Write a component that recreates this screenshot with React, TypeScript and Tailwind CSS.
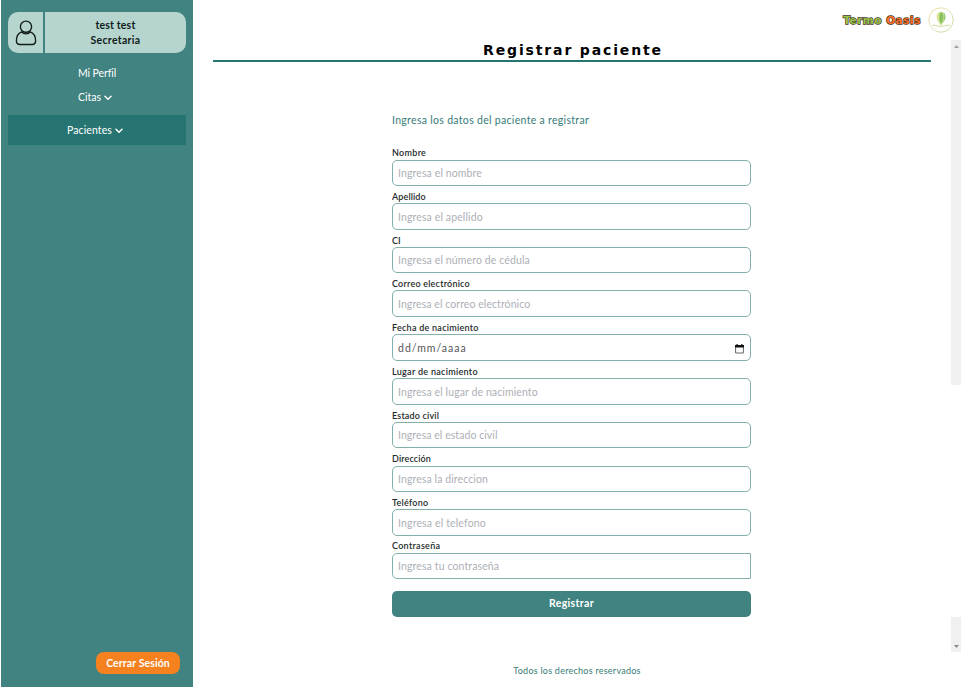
import React from "react";

type Field = { label: string; hint: string; hintTracking: string; labelTracking: string };

const fields: Field[] = [
  { label: "Nombre", hint: "Ingresa el nombre", hintTracking: "tracking-[0.12px]", labelTracking: "tracking-[0.3px]" },
  { label: "Apellido", hint: "Ingresa el apellido", hintTracking: "tracking-[0.12px]", labelTracking: "tracking-[0.12px]" },
  { label: "CI", hint: "Ingresa el número de cédula", hintTracking: "tracking-[0.12px]", labelTracking: "tracking-[0px]" },
  { label: "Correo electrónico", hint: "Ingresa el correo electrónico", hintTracking: "tracking-[0.07px]", labelTracking: "tracking-[0.22px]" },
  { label: "Fecha de nacimiento", hint: "dd/mm/aaaa", hintTracking: "tracking-[1px]", labelTracking: "tracking-[0.26px]" },
  { label: "Lugar de nacimiento", hint: "Ingresa el lugar de nacimiento", hintTracking: "tracking-[0.1px]", labelTracking: "tracking-[0.3px]" },
  { label: "Estado civil", hint: "Ingresa el estado civil", hintTracking: "tracking-[0.06px]", labelTracking: "tracking-[0.17px]" },
  { label: "Dirección", hint: "Ingresa la direccion", hintTracking: "tracking-[0.1px]", labelTracking: "tracking-[0.12px]" },
  { label: "Teléfono", hint: "Ingresa el telefono", hintTracking: "tracking-[0.15px]", labelTracking: "tracking-[0.25px]" },
  { label: "Contraseña", hint: "Ingresa tu contraseña", hintTracking: "tracking-[0.12px]", labelTracking: "tracking-[0.3px]" },
];

function Chevron() {
  return (
    <svg width="8" height="6" viewBox="0 0 8 6" fill="none" stroke="currentColor" strokeWidth="1.5" strokeLinecap="round" strokeLinejoin="round">
      <path d="M1 1.2 4 4.2 7 1.2" />
    </svg>
  );
}

function Person() {
  return (
    <svg width="22" height="26" viewBox="0 0 22 26" fill="none" stroke="#101c1b" strokeWidth="1.4">
      <circle cx="11" cy="6.7" r="5.6" />
      <path d="M6.6 11.9C3.300 13.200 1.400 16.900 1.400 20.800c0 2.700 1.200 3.700 3.500 3.700h12.200c2.300 0 3.500-1 3.500-3.700 0-3.900-1.900-7.600-5.200-8.900-2.500 2.600-6.300 2.600-8.800 0Z" strokeLinejoin="round" />
    </svg>
  );
}

function Calendar() {
  return (
    <svg className="mr-[1px]" width="9" height="10" viewBox="0 0 9 10">
      <path d="M.6 2h7.800v7H.6z" fill="none" stroke="#666" strokeWidth="1" />
      <path d="M0 1h9v2.600H0zM1.500 0h1.200v1.500H1.500zM6.300 0h1.200v1.500H6.300z" fill="#111" />
    </svg>
  );
}

function Balloon() {
  return (
    <svg width="26" height="26" viewBox="0 0 26 26" fill="none">
      <defs>
        <linearGradient id="ring" x1="0" y1="0" x2="1" y2="1">
          <stop offset="0" stopColor="#f3cf90" />
          <stop offset=".5" stopColor="#dfe3b4" />
          <stop offset="1" stopColor="#b3d48e" />
        </linearGradient>
        <linearGradient id="leaf">
          <stop offset="0" stopColor="#dfe58a" />
          <stop offset="1" stopColor="#79bd5b" />
        </linearGradient>
      </defs>
      <circle cx="13" cy="13" r="12.2" stroke="url(#ring)" strokeWidth=".9" />
      <path d="M13 18.300C9.700 14.700 8.600 12.500 8.600 9.600a4.400 4.600 0 0 1 8.800 0C17.400 12.500 16.300 14.700 13 18.300Z" fill="url(#leaf)" />
      <path d="M13 5.300c-2 3-2 8 0 12.400 2-4.400 2-9.400 0-12.400Z" fill="#86c05a" />
      <path d="M11 5.700c-1.600 3-1 7.500 1.700 11.700M15 5.700c1.600 3 1 7.500-1.700 11.700" stroke="#f6f7cf" strokeWidth=".5" />
      <path d="M4.500 18.300c3.500-.6 4.500 1.100 8.500 1 4-.1 5.500-1.500 9-1" stroke="#cfdb94" strokeWidth="1" />
    </svg>
  );
}

function Sidebar() {
  return (
    <aside className="ml-px flex h-full w-[192px] shrink-0 flex-col bg-[#418380] pt-3 pr-[7px] pl-[7px] text-[10.5px] text-white">
      <div className="flex h-[41px] w-[178px] gap-[2px] overflow-hidden rounded-[10px] text-[#101c1b]">
        <div className="flex w-[35px] items-center justify-center bg-[#b7d5cf]"><Person /></div>
        <div className="flex flex-1 flex-col items-center justify-center bg-[#b7d5cf] text-[10.5px] leading-[15px] font-bold">
          <span className="tracking-[0.15px]">test test</span>
          <span className="tracking-[0.3px]">Secretaria</span>
        </div>
      </div>
      <div className="mt-[13px] flex h-[15px] items-center justify-center tracking-[-0.1px]">Mi Perfil</div>
      <div className="mt-[9px] flex h-[15px] items-center justify-center gap-[3px] pr-[4px]">Citas <Chevron /></div>
      <div className="mt-[10px] flex h-[30px] w-[178px] items-center justify-center gap-[3px] bg-[#277572] pt-[2px] pr-[4px] tracking-[0.1px]">Pacientes <Chevron /></div>
      <div className="mt-auto mr-[6px] mb-[13px] flex h-[22px] w-[84px] items-center justify-center self-end rounded-[8px] bg-[#f5811f] pt-px font-bold tracking-[0.1px]">Cerrar Sesión</div>
    </aside>
  );
}

export default function App() {
  return (
    <div className="flex h-[687px] w-[961px] overflow-hidden bg-white font-['Lato',sans-serif]">
      <Sidebar />
      <main className="flex min-w-0 flex-1 flex-col">
        <header className="flex h-[40px] items-center justify-end gap-[7px] pr-[7px]">
          <div className="flex gap-[4px] pt-px font-['DejaVu_Sans',sans-serif] text-[10.5px] font-bold tracking-[0.55px] [-webkit-text-stroke:1.3px_#40321c] [paint-order:stroke_fill]">
            <span className="text-[#9bc34c]">Termo</span>
            <span className="text-[#ff702b]">Oasis</span>
          </div>
          <Balloon />
        </header>
        <div className="flex h-[612px]">
          <section className="flex flex-1 flex-col pl-5">
            <h1 className="flex h-[22px] w-[718px] items-center justify-center border-b-2 border-[#277572] pl-[2px] font-['DejaVu_Sans',sans-serif] text-[14px] font-bold tracking-[1.85px] text-black">Registrar paciente</h1>
            <form className="mt-[50px] ml-[179px] w-[359px]">
              <p className="flex h-4 items-center pt-px text-[10.5px] tracking-[0.31px] text-[#367b77]">Ingresa los datos del paciente a registrar</p>
              <div className="mt-[18.700px]">
                {fields.map((f, i) => (
                  <div key={f.label} className={i === 4 ? "h-[44.3px]" : "h-[43.6px]"}>
                    <label className={`flex h-[13px] items-center text-[9px] font-semibold text-[#252b2b] ${f.labelTracking}`}>{f.label}</label>
                    <div className={`flex items-center justify-between border border-[#82b0ad] px-[5px] pt-[2px] text-[10.5px] ${f.hintTracking} ${i === 4 ? "h-[27px] text-[#555] " : "h-[26.500px] text-[#adb0b7] "} ${i === 9 ? "rounded-l-[5px]" : "rounded-[5px]"}`}>
                      <span>{f.hint}</span>
                      {i === 4 && <Calendar />}
                    </div>
                  </div>
                ))}
              </div>
              <button type="button" className="mt-[7.300px] flex h-[26px] w-full items-center justify-center rounded-[5px] bg-[#418380] pt-px text-[10.5px] font-bold tracking-[0.35px] text-white">Registrar</button>
            </form>
          </section>
          <div className="flex w-[10px] flex-col justify-between">
            <div className="flex h-[345px] justify-center bg-[#f0f0f0] pt-[5px]">
              <svg width="5" height="3"><path d="M2.500 0 5 3H0Z" fill="#a3a3a3" /></svg>
            </div>
            <div className="flex h-[35px] items-end justify-center bg-[#f0f0f0] pb-[4px]">
              <svg width="5" height="3"><path d="M0 0h5L2.500 3Z" fill="#8a8a8a" /></svg>
            </div>
          </div>
        </div>
        <footer className="flex flex-1 items-center justify-center pt-[2px] text-[9px] tracking-[0.25px] text-[#367b77]">Todos los derechos reservados</footer>
      </main>
    </div>
  );
}
